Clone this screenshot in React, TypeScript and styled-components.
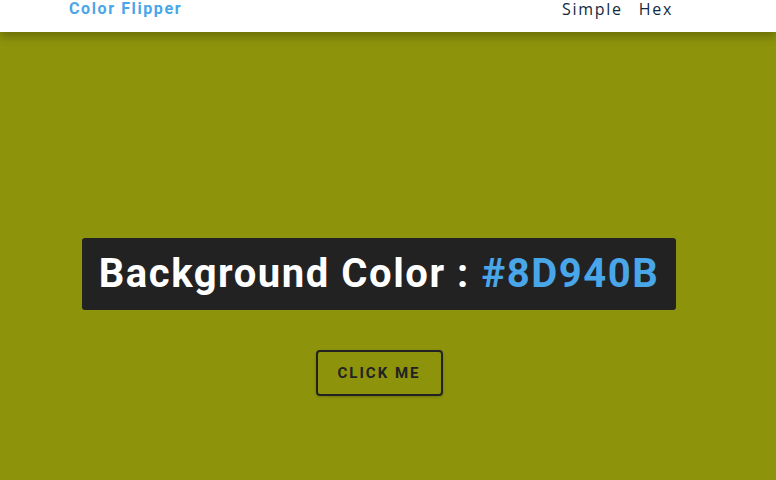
import React from "react";
import styled, { createGlobalStyle } from "styled-components";

const Global = createGlobalStyle`
  * { box-sizing: border-box; margin: 0; padding: 0; }
  html, body { width: 100%; height: 100%; }
  body { margin: 0; font-family: "Open Sans", sans-serif; background: #8d940b; overflow: hidden; }
  #root { height: 100%; }
`;

const Page = styled.div`
  height: 100%;
  display: flex;
  flex-direction: column;
`;

const Nav = styled.nav`
  position: relative;
  z-index: 1;
  height: 32px;
  background: #fff;
  box-shadow: 0 5px 10px rgba(0, 0, 0, 0.25);
  flex-shrink: 0;
`;

const NavInner = styled.div`
  display: flex;
  justify-content: space-between;
  align-items: flex-start;
  padding: 0 103px 0 69px;
`;

const Logo = styled.h4`
  font-family: Roboto, sans-serif;
  font-weight: 700;
  font-size: 16px;
  line-height: 17px;
  letter-spacing: 1.6px;
  color: #49a6e9;
`;

const Links = styled.ul`
  display: flex;
  list-style: none;
  gap: 16px;
`;

const LinkItem = styled.li`
  font-family: "Open Sans", sans-serif;
  font-size: 16px;
  line-height: 19px;
  letter-spacing: 1.7px;
  color: #102a42;
`;

const Main = styled.main`
  flex: 1;
  display: flex;
  flex-direction: column;
  align-items: center;
  padding: 206px 18px 0 0;
`;

const Heading = styled.h2`
  background: #222;
  color: #fff;
  font-family: Roboto, sans-serif;
  font-weight: 700;
  font-size: 40px;
  line-height: 48px;
  letter-spacing: 1.55px;
  padding: 12px 17px;
  border-radius: 3px;
`;

const Hex = styled.span`
  color: #49a6e9;
`;

const Button = styled.button`
  margin-top: 40px;
  background: transparent;
  border: 2px solid #222;
  border-radius: 4px;
  padding: 0;
  width: 127px;
  height: 46px;
  font-family: Roboto, sans-serif;
  font-weight: 700;
  font-size: 15px;
  letter-spacing: 2px;
  color: #222;
  text-transform: uppercase;
  box-shadow: 0 1px 3px rgba(0, 0, 0, 0.2);
  cursor: pointer;
`;

export default function App() {
  return (
    <Page>
      <Global />
      <Nav>
        <NavInner>
          <Logo>Color Flipper</Logo>
          <Links>
            <LinkItem>Simple</LinkItem>
            <LinkItem>Hex</LinkItem>
          </Links>
        </NavInner>
      </Nav>
      <Main>
        <Heading>
          Background Color : <Hex>#8D940B</Hex>
        </Heading>
        <Button>click me</Button>
      </Main>
    </Page>
  );
}
